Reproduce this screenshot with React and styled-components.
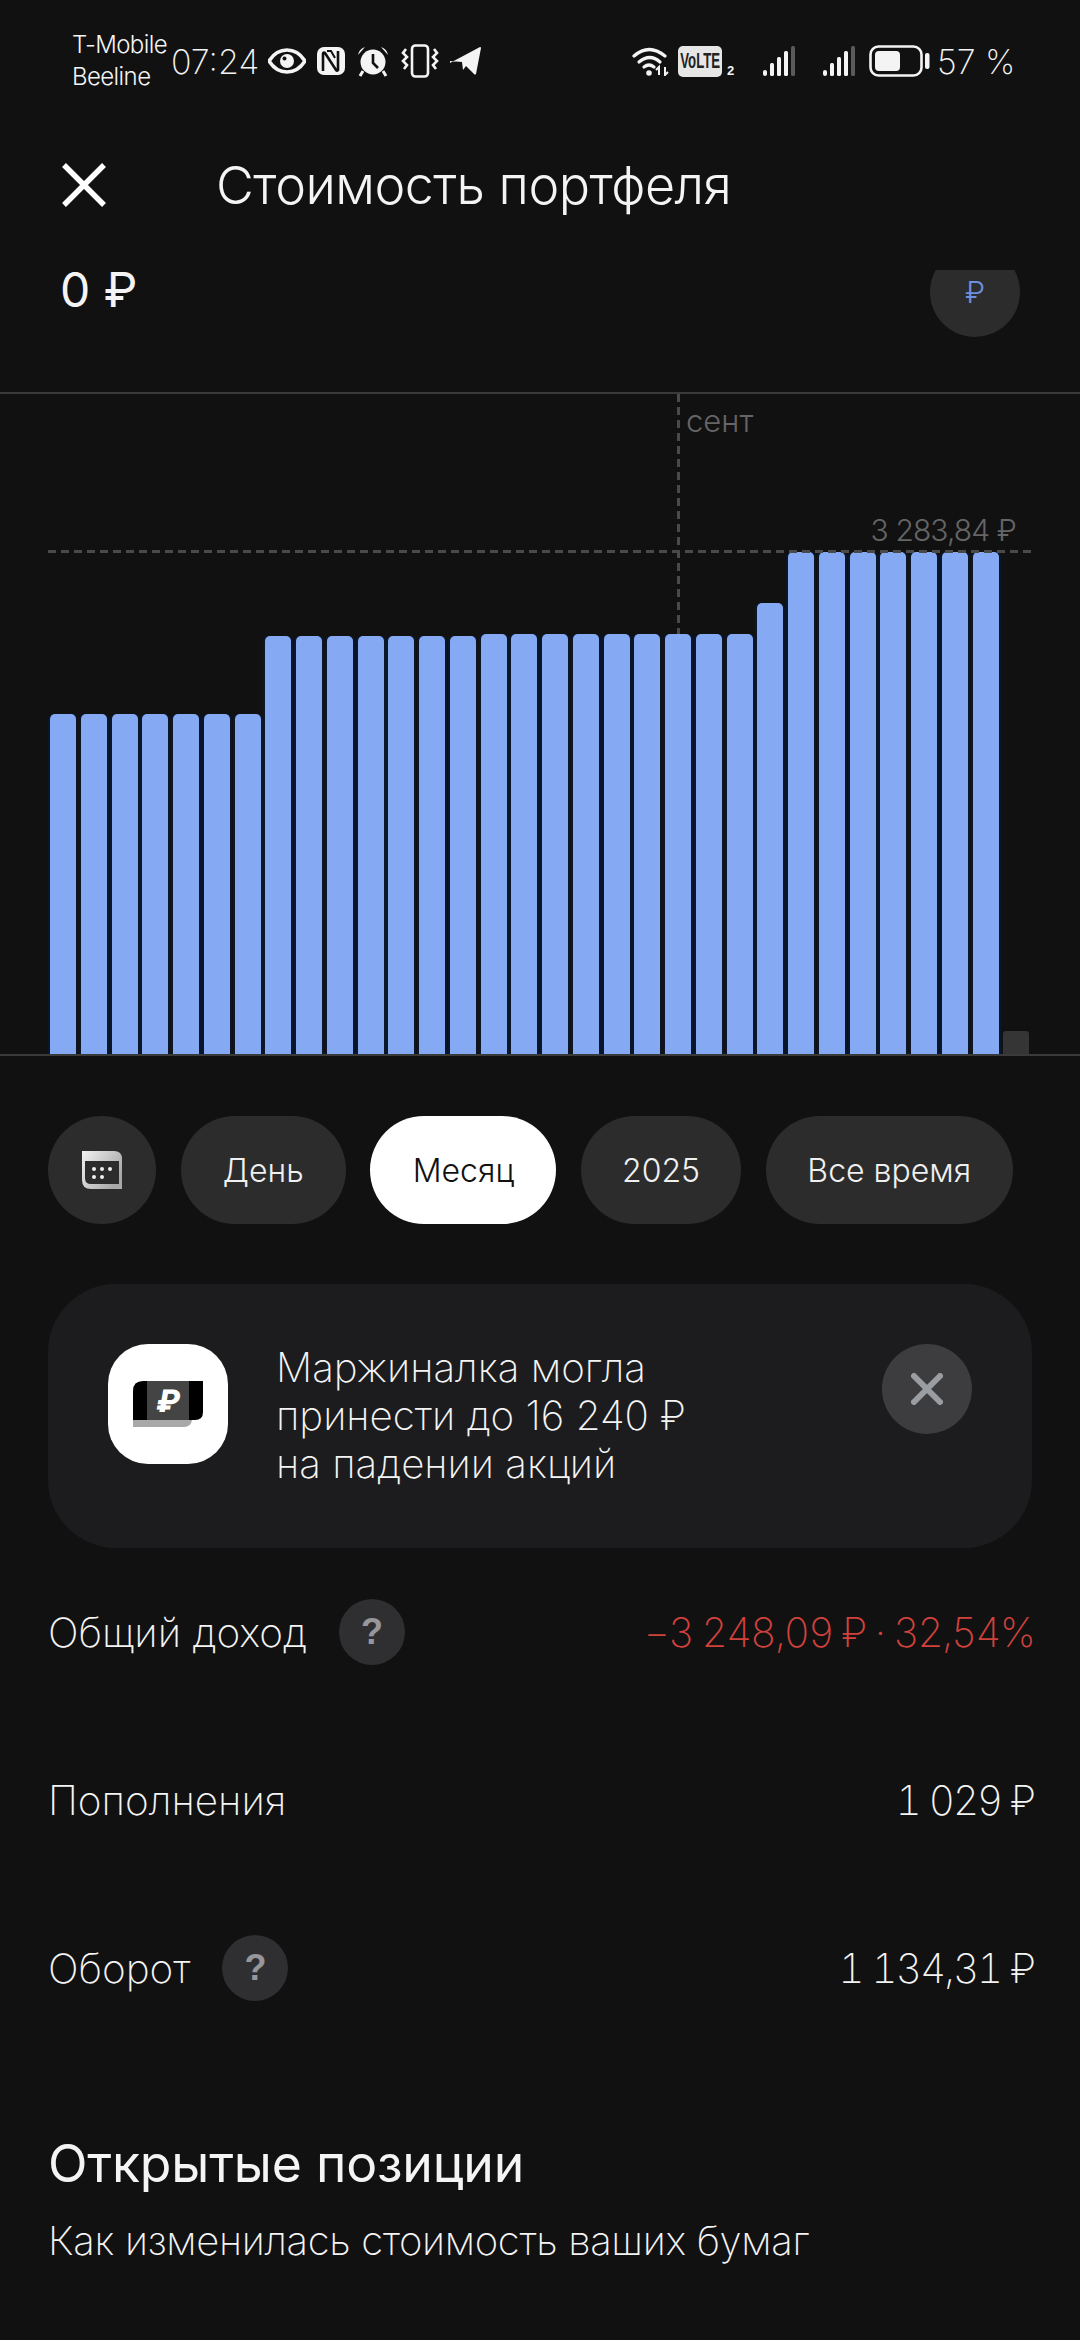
import React from "react";
import styled, { createGlobalStyle } from "styled-components";

const Global = createGlobalStyle`
  html, body {
    margin: 0;
    padding: 0;
    background: #111112;
  }
  * {
    box-sizing: border-box;
  }
`;

const Page = styled.div`
  width: 1080px;
  height: 2340px;
  overflow: hidden;
  background: #111112;
  color: #f4f4f4;
  font-family: "Inter", "Liberation Sans", sans-serif;
  font-weight: 300;
`;

const StatusBar = styled.div`
  height: 124px;
  padding: 28px 66px 0 72px;
  display: flex;
  justify-content: space-between;
  align-items: flex-start;
`;

const StatusGroup = styled.div`
  display: flex;
  align-items: center;
  height: 66px;
`;

const Carriers = styled.div`
  width: 99px;
  font-size: 24px;
  line-height: 32px;
  letter-spacing: -0.6px;
`;

const Clock = styled.div`
  font-size: 34px;
  width: 97px;
  font-weight: 200;
`;

const Percent = styled.div`
  font-size: 34px;
  font-weight: 200;
  margin-left: 7px;
  width: 77px;
  white-space: nowrap;
`;

const Volte = styled.div`
  width: 44px;
  height: 31px;
  margin-left: 9px;
  border-radius: 5px;
  background: #e6e6e6;
  color: #222;
  display: flex;
  align-items: center;
  justify-content: center;
  font: 700 22px "Liberation Sans", sans-serif;
  overflow: hidden;
  span {
    transform: scaleX(0.6);
  }
`;

const SimNumber = styled.div`
  font: 700 13px "Liberation Sans", sans-serif;
  align-self: flex-end;
  margin: 0 0 16px 5px;
  width: 36px;
`;

const Header = styled.div`
  height: 146px;
  padding: 0 0 24px 62px;
  display: flex;
  align-items: center;
`;

const Title = styled.div`
  font-size: 52px;
  margin-left: 110px;
  letter-spacing: -0.5px;
`;

const BalanceRow = styled.div`
  height: 124px;
  display: flex;
  justify-content: space-between;
  align-items: flex-start;
  padding: 0 60px;
  border-bottom: 2px solid #3a3a3b;
`;

const Balance = styled.div`
  font-size: 48px;
  font-weight: 400;
  line-height: 40px;
`;

/* the scroll edge under the header cuts the top of this button */
const ButtonClip = styled.div`
  height: 67px;
  overflow: hidden;
`;

const CurrencyButton = styled.div`
  width: 90px;
  height: 90px;
  margin-top: -23px;
  border-radius: 50%;
  background: #2c2c2d;
  color: #6d90e0;
  font-size: 30px;
  display: flex;
  align-items: center;
  justify-content: center;
`;

const Chart = styled.div`
  position: relative;
  height: 662px;
  padding: 0 50px;
  display: flex;
  align-items: flex-end;
  gap: 4.75px;
  border-bottom: 2px solid #3a3a3b;
`;

const Bar = styled.div`
  width: 26px;
  flex: none;
  height: ${(p) => p.$h}px;
  border-radius: ${(p) => (p.$empty ? "3px 3px 0 0" : "5px 5px 0 0")};
  background: ${(p) => (p.$empty ? "#353536" : "#86a9f3")};
  box-shadow: ${(p) => (p.$empty ? "none" : "2px 0 0 #0b1628, -2px 0 0 #0b1628")};
`;

const VerticalGuide = styled.div`
  position: absolute;
  left: 677px;
  top: 0;
  width: 3px;
  height: 240px;
  background: repeating-linear-gradient(to bottom, #4a4a4b 0 8px, transparent 8px 13px);
`;

const HorizontalGuide = styled.div`
  position: absolute;
  left: 48px;
  right: 48px;
  top: 156px;
  height: 3px;
  background: repeating-linear-gradient(to right, #4a4a4b 0 8px, transparent 8px 13px);
  z-index: 1;
`;

const MonthLabel = styled.div`
  position: absolute;
  left: 686px;
  top: 8px;
  font-size: 31px;
  color: #656566;
`;

const ValueLabel = styled.div`
  position: absolute;
  right: 64px;
  top: 118px;
  font-size: 30px;
  letter-spacing: -0.9px;
  color: #656566;
`;

const Periods = styled.div`
  margin-top: 60px;
  padding: 0 48px;
  display: flex;
  gap: 24.7px;
`;

const Pill = styled.div`
  height: 108px;
  width: ${(p) => p.$w}px;
  border-radius: 54px;
  flex: none;
  background: ${(p) => (p.$active ? "#fff" : "#2c2c2d")};
  color: ${(p) => (p.$active ? "#111" : "#f0f0f0")};
  font-size: 32px;
  display: flex;
  align-items: center;
  justify-content: center;
`;

const PromoCard = styled.div`
  margin: 60px 48px 0;
  height: 264px;
  border-radius: 68px;
  background: #1c1c1e;
  padding: 60px;
  display: flex;
  align-items: flex-start;
`;

const PromoTile = styled.div`
  width: 120px;
  height: 120px;
  flex: none;
  border-radius: 40px;
  background: #fff;
  display: flex;
  align-items: center;
  justify-content: center;
`;

const PromoText = styled.div`
  flex: 1;
  margin: 0 0 0 48px;
  font-size: 40.3px;
  line-height: 48px;
  font-weight: 200;
`;

const CloseCircle = styled.div`
  width: 90px;
  height: 90px;
  flex: none;
  border-radius: 50%;
  background: #3d3d3f;
  display: flex;
  align-items: center;
  justify-content: center;
`;

const Rows = styled.div`
  padding: 0 48px;
`;

const Row = styled.div`
  height: 168px;
  display: flex;
  align-items: center;
  justify-content: space-between;
  font-size: 40.5px;
  font-weight: 200;
`;

const RowLabel = styled.div`
  display: flex;
  align-items: center;
  gap: 32px;
`;

const RowValue = styled.div`
  color: ${(p) => p.$color || "#f4f4f4"};
  letter-spacing: ${(p) => p.$spacing || 0}px;
  font-variant-numeric: tabular-nums;
  margin-right: -2px;
`;

const Help = styled.div`
  width: 66px;
  height: 66px;
  border-radius: 50%;
  background: #2f2f31;
  color: #97979b;
  font: 700 36px "Liberation Sans", sans-serif;
  display: flex;
  align-items: center;
  justify-content: center;
`;

const SectionTitle = styled.div`
  font-size: 51.7px;
  font-weight: 400;
  letter-spacing: -0.2px;
  margin: 80px 48px 0;
`;

const SectionText = styled.div`
  font-size: 40px;
  font-weight: 200;
  letter-spacing: -0.3px;
  margin: 22px 48px 0;
`;

const Icon = styled.svg`
  display: block;
  flex: none;
  margin-left: ${(p) => p.$ml || 0}px;
`;

const Eye = () => (
  <Icon width="38" height="26" viewBox="0 0 38 26">
    <path d="M1 13C6 5 12 2 19 2s13 3 18 11c-5 8-11 11-18 11S6 21 1 13z" fill="none" stroke="#f4f4f4" strokeWidth="3.6" />
    <circle cx="19" cy="13" r="7" fill="#f4f4f4" />
    <circle cx="16.5" cy="10.5" r="2" fill="#111" />
  </Icon>
);

const Nfc = () => (
  <Icon width="28" height="28" viewBox="0 0 28 28" $ml={11}>
    <rect width="28" height="28" rx="7" fill="#f4f4f4" />
    <path d="M6 24V7q0-2 2-1l11 17q1 1 2 0V4" fill="none" stroke="#111" strokeWidth="2.6" />
    <path d="M10 4h4l4 7" fill="none" stroke="#111" strokeWidth="2" />
  </Icon>
);

const Alarm = () => (
  <Icon width="32" height="31" viewBox="0 0 32 31" $ml={12}>
    <circle cx="16" cy="16" r="12.5" fill="#f4f4f4" />
    <path d="M16 8v9l5 5" fill="none" stroke="#111" strokeWidth="2.6" />
    <path d="M1 9q1-6 7-8zM31 9q-1-6-7-8z" fill="#f4f4f4" />
    <path d="M6 25l-3 5M26 25l3 5" stroke="#f4f4f4" strokeWidth="3" />
  </Icon>
);

const Vibrate = () => (
  <Icon width="38" height="34" viewBox="0 0 38 34" $ml={12}>
    <rect x="11" y="1.5" width="16" height="31" rx="3.5" fill="none" stroke="#f4f4f4" strokeWidth="2.6" />
    <path d="M5 5l-3 4 4 4-4 4 4 4-3 4M33 5l3 4-4 4 4 4-4 4 3 4" fill="none" stroke="#f4f4f4" strokeWidth="2.6" />
  </Icon>
);

const Telegram = () => (
  <Icon width="31" height="28" viewBox="0 0 31 28" $ml={11}>
    <path d="M0 16L30 0q1 0 1 1l-5 26q-1 1-2 0l-8-8-3 4-1-8-12-1z" fill="#f4f4f4" />
  </Icon>
);

const Wifi = () => (
  <Icon width="37" height="30" viewBox="0 0 37 30">
    <g fill="none" stroke="#f4f4f4" strokeWidth="3.2" strokeLinecap="round">
      <path d="M2 10Q17-3 33 10" />
      <path d="M7 16q11-9 21 0" />
      <path d="M12 21q5-4 10 0" />
    </g>
    <circle cx="17" cy="27" r="2.8" fill="#f4f4f4" />
    <path d="M27 29v-8l-3 3M33 21v8l3-3" fill="none" stroke="#f4f4f4" strokeWidth="2" />
  </Icon>
);

const Signal = ({ ml }) => (
  <Icon width="33" height="30" viewBox="0 0 33 30" $ml={ml}>
    <rect x="0" y="24" width="4" height="6" rx="2" fill="#f4f4f4" />
    <rect x="7" y="17" width="4" height="13" rx="1.5" fill="#f4f4f4" />
    <rect x="14" y="11" width="4" height="19" rx="1.5" fill="#f4f4f4" />
    <rect x="21" y="5" width="4" height="25" rx="1.5" fill="#f4f4f4" />
    <rect x="28" y="0" width="4" height="30" rx="1.5" fill="#5a5a5a" />
  </Icon>
);

const Battery = () => (
  <Icon width="61" height="32" viewBox="0 0 61 32" $ml={13}>
    <rect x="1.5" y="1.5" width="51" height="29" rx="8" fill="none" stroke="#f4f4f4" strokeWidth="2.6" />
    <rect x="6" y="6" width="25" height="20" rx="4" fill="#f4f4f4" />
    <rect x="56" y="8" width="4.5" height="16" rx="2" fill="#f4f4f4" />
  </Icon>
);

const CalendarIcon = () => (
  <svg width="40" height="38" viewBox="0 0 40 38">
    <defs>
      <linearGradient id="calTop" x1="0" y1="0" x2="1" y2="0.6">
        <stop offset="0" stopColor="#f2f2f2" />
        <stop offset="1" stopColor="#a8a8a8" />
      </linearGradient>
    </defs>
    <path d="M0 0h32q8 0 8 8v30H9q-9 0-9-9z" fill="url(#calTop)" />
    <path d="M3 10h34v23H9q-6 0-6-6z" fill="#2c2c2d" />
    <g fill="#f0f0f0">
      <circle cx="12" cy="18" r="2" />
      <circle cx="20" cy="18" r="2" />
      <circle cx="28" cy="18" r="2" />
      <circle cx="12" cy="26" r="2" />
      <circle cx="20" cy="26" r="2" />
    </g>
  </svg>
);

const MarginIcon = () => (
  <svg width="70" height="46" viewBox="0 0 70 46">
    <path d="M0 39h59q-1 7-8 7H0z" fill="#a8a8a8" />
    <path d="M10 0h60v31q0 8-8 8H0V10Q0 0 10 0z" fill="#000" />
    <rect x="14" y="0" width="42" height="39" fill="#444" />
    <text x="36" y="31" textAnchor="middle" fontFamily="Inter" fontWeight="800" fontSize="31" fill="#fff" transform="skewX(-10) translate(3 0)">₽</text>
  </svg>
);

const BackIcon = () => (
  <svg width="44" height="44" viewBox="0 0 44 44">
    <path d="M2 2l40 40M42 2L2 42" fill="none" stroke="#fff" strokeWidth="5.5" />
  </svg>
);

const CloseIcon = () => (
  <svg width="32" height="32" viewBox="0 0 32 32">
    <path d="M3 3l26 26M29 3L3 29" fill="none" stroke="#9a9ea3" strokeWidth="6" strokeLinecap="round" />
  </svg>
);

const bars = [
  ...Array(7).fill(340),
  ...Array(7).fill(418),
  ...Array(9).fill(420),
  451,
  ...Array(7).fill(502),
];

const App = () => (
  <Page>
    <Global />
    <StatusBar>
      <StatusGroup>
        <Carriers>
          T-Mobile
          <br />
          Beeline
        </Carriers>
        <Clock>07:24</Clock>
        <Eye />
        <Nfc />
        <Alarm />
        <Vibrate />
        <Telegram />
      </StatusGroup>
      <StatusGroup>
        <Wifi />
        <Volte>
          <span>VoLTE</span>
        </Volte>
        <SimNumber>2</SimNumber>
        <Signal />
        <Signal ml={27} />
        <Battery />
        <Percent>57 %</Percent>
      </StatusGroup>
    </StatusBar>
    <Header>
      <BackIcon />
      <Title>Стоимость портфеля</Title>
    </Header>
    <BalanceRow>
      <Balance>0 ₽</Balance>
      <ButtonClip>
        <CurrencyButton>₽</CurrencyButton>
      </ButtonClip>
    </BalanceRow>
    <Chart>
      <VerticalGuide />
      <MonthLabel>сент</MonthLabel>
      <HorizontalGuide />
      <ValueLabel>3 283,84 ₽</ValueLabel>
      {bars.map((h, i) => (
        <Bar key={i} $h={h} />
      ))}
      <Bar $h={23} $empty />
    </Chart>
    <Periods>
      <Pill $w={108}>
        <CalendarIcon />
      </Pill>
      <Pill $w={165}>День</Pill>
      <Pill $w={186} $active>
        Месяц
      </Pill>
      <Pill $w={160}>2025</Pill>
      <Pill $w={247}>Все время</Pill>
    </Periods>
    <PromoCard>
      <PromoTile>
        <MarginIcon />
      </PromoTile>
      <PromoText>
        Маржиналка могла
        <br />
        принести до 16 240 ₽
        <br />
        на падении акций
      </PromoText>
      <CloseCircle>
        <CloseIcon />
      </CloseCircle>
    </PromoCard>
    <Rows>
      <Row>
        <RowLabel>
          Общий доход
          <Help>?</Help>
        </RowLabel>
        <RowValue $color="#d2423c" $spacing={-1.8}>
          −3 248,09 ₽ · 32,54%
        </RowValue>
      </Row>
      <Row>
        <RowLabel>Пополнения</RowLabel>
        <RowValue $spacing={-2}>1 029 ₽</RowValue>
      </Row>
      <Row>
        <RowLabel>
          Оборот
          <Help>?</Help>
        </RowLabel>
        <RowValue $spacing={-2}>1 134,31 ₽</RowValue>
      </Row>
    </Rows>
    <SectionTitle>Открытые позиции</SectionTitle>
    <SectionText>Как изменилась стоимость ваших бумаг</SectionText>
  </Page>
);

export default App;
